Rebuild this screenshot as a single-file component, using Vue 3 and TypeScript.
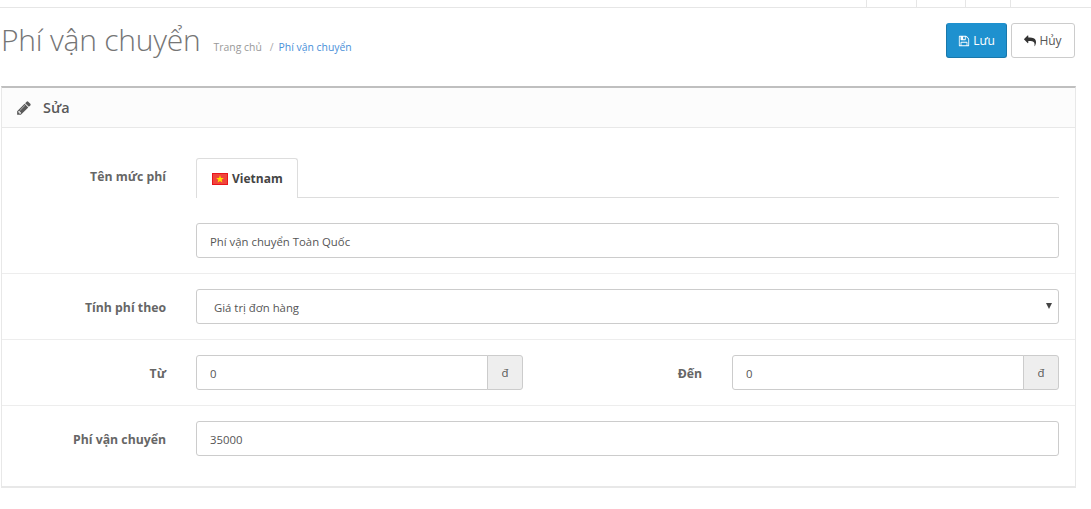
<script setup lang="ts">
const topCells: number[] = [50, 49, 45, 81];
</script>

<template>
  <div class="page">
    <header class="topbar">
      <span v-for="(w, i) in topCells" :key="i" class="cell" :style="{ width: w + 'px' }"></span>
    </header>

    <div class="page-head">
      <div class="title-wrap">
        <h1>Phí vận chuyển</h1>
        <ul class="crumbs">
          <li><a class="muted">Trang chủ</a></li>
          <li class="sep">/</li>
          <li><a class="link">Phí vận chuyển</a></li>
        </ul>
      </div>
      <div class="actions">
        <button class="btn primary" type="button">
          <svg class="ico" viewBox="0 0 1792 1792"><path fill="currentColor" d="M512 1536h768v-384h-768v384zm896 0h128v-896q0-14-10-38.5t-20-34.5l-281-281q-10-10-34-20t-39-10v416q0 40-28 68t-68 28h-576q-40 0-68-28t-28-68v-416h-128v1280h128v-416q0-40 28-68t68-28h832q40 0 68 28t28 68v416zm-384-928v-320q0-13-9.5-22.5t-22.5-9.5h-192q-13 0-22.5 9.5t-9.5 22.5v320q0 13 9.5 22.5t22.5 9.5h192q13 0 22.5-9.5t9.5-22.5zm640 32v928q0 40-28 68t-68 28h-1344q-40 0-68-28t-28-68v-1344q0-40 28-68t68-28h928q40 0 88 20t76 48l280 280q28 28 48 76t20 88z"/></svg>
          Lưu
        </button>
        <button class="btn plain" type="button">
          <svg class="ico" viewBox="0 0 1792 1792"><path fill="currentColor" d="M1792 1120q0 166-127 451-3 7-10.5 24t-13.5 30-13 22q-12 17-28 17-15 0-23.5-10t-8.5-25q0-9 2.5-26.5t2.5-23.5q5-68 5-123 0-101-17.5-181t-48.5-138.5-80-101-105.5-69.5-133-42.5-154-21.5-175.5-6h-224v256q0 26-19 45t-45 19-45-19l-512-512q-19-19-19-45t19-45l512-512q19-19 45-19t45 19 19 45v256h224q713 0 875 403 53 134 53 333z"/></svg>
          Hủy
        </button>
      </div>
    </div>

    <section class="panel">
      <div class="panel-heading">
        <svg class="pencil" viewBox="0 0 1792 1792"><path fill="currentColor" d="M491 1536l91-91-235-235-91 91v107h128v128h107zm523-928q0-22-22-22-10 0-17 7l-542 542q-7 7-7 17 0 22 22 22 10 0 17-7l542-542q7-7 7-17zm-54-192l416 416-832 832h-416v-416zm683 96q0 53-37 90l-166 166-416-416 166-165q36-38 90-38 53 0 91 38l235 234q37 39 37 91z"/></svg>
        <span>Sửa</span>
      </div>

      <form class="form" @submit.prevent>
        <div class="row first">
          <label class="lbl tab-lbl">Tên mức phí</label>
          <div class="field">
            <div class="tabs">
              <div class="tab">
                <svg class="flag" viewBox="0 0 16 12">
                  <rect width="16" height="12" fill="#ee1c25"/>
                  <rect x="0.5" y="0.5" width="15" height="11" fill="#f0443c" stroke="#e8141c"/>
                  <polygon points="8,2.2 9,5 11.9,5 9.6,6.8 10.4,9.6 8,7.9 5.6,9.6 6.4,6.8 4.1,5 7,5" fill="#ffe000"/>
                </svg>
                <span>Vietnam</span>
              </div>
            </div>
            <input class="control" type="text" value="Phí vận chuyển Toàn Quốc" />
          </div>
        </div>

        <div class="row">
          <label class="lbl">Tính phí theo</label>
          <div class="field select-wrap">
            <select class="control">
              <option>Giá trị đơn hàng</option>
            </select>
          </div>
        </div>

        <div class="row">
          <label class="lbl">Từ</label>
          <div class="field pair">
            <div class="group">
              <input class="control" type="text" value="0" />
              <span class="addon">đ</span>
            </div>
            <label class="lbl mid">Đến</label>
            <div class="group">
              <input class="control" type="text" value="0" />
              <span class="addon">đ</span>
            </div>
          </div>
        </div>

        <div class="row last">
          <label class="lbl">Phí vận chuyển</label>
          <div class="field">
            <input class="control" type="text" value="35000" />
          </div>
        </div>
      </form>
    </section>
  </div>
</template>

<style>
html, body {
  margin: 0;
  background: #fff;
}
</style>

<style scoped>
.page {
  width: 1091px;
  height: 509px;
  overflow: hidden;
  background: #fff;
  font-family: "Open Sans", "Noto Sans", sans-serif;
  font-size: 12px;
  color: #666;
}
.topbar {
  height: 7px;
  border-bottom: 1px solid #e6e6e6;
  display: flex;
  justify-content: flex-end;
}
.cell {
  box-sizing: border-box;
  border-left: 1px solid #e6e6e6;
}
.page-head {
  box-sizing: border-box;
  display: flex;
  justify-content: space-between;
  align-items: flex-start;
  height: 78px;
  padding: 15px 16px 0 1px;
}
.title-wrap {
  display: flex;
  align-items: baseline;
  margin-top: -1px;
}
h1 {
  margin: 0;
  font-size: 30px;
  letter-spacing: -0.22px;
  line-height: 36px;
  font-weight: 300;
  color: #757575;
}
.crumbs {
  list-style: none;
  margin: 0 0 0 13px;
  padding: 0;
  display: flex;
  font-size: 10.4px;
}
.muted { color: #999; }
.sep { color: #aaa; margin: 0 5px 0 8px; }
.link { color: #4a90d9; }
.actions {
  display: flex;
  gap: 4px;
}
.btn {
  height: 35px;
  box-sizing: border-box;
  border-radius: 3px;
  font-family: inherit;
  font-size: 12px;
  display: inline-flex;
  align-items: center;
  justify-content: center;
  gap: 3px;
  padding: 0;
}
.ico { width: 12px; height: 12px; }
.primary {
  width: 61px;
  background: #1e91cf;
  border: 1px solid #1978ab;
  border-top-color: #1e91cf;
  color: #fff;
}
.plain {
  width: 64px;
  background: #fff;
  border: 1px solid #ccc;
  color: #555;
}
.plain .ico { color: #333; }
.panel {
  box-sizing: border-box;
  width: 1075px;
  height: 402px;
  margin-left: 1px;
  border: 1px solid #e8e8e8;
  border-top: 2px solid #bfbfbf;
  border-bottom: 2px solid #e8e8e8;
}
.panel-heading {
  height: 40px;
  box-sizing: border-box;
  background: #fcfcfc;
  border-bottom: 1px solid #e8e8e8;
  display: flex;
  align-items: center;
  padding-left: 14px;
  gap: 11px;
  font-size: 14.4px;
  font-weight: 600;
  color: #595959;
}
.pencil { width: 16px; height: 16px; }
.row {
  display: flex;
  padding: 15px 16px 15px 15px;
  border-top: 1px solid #ededed;
}
.row.first {
  padding-top: 30px;
  border-top: 0;
}
.row.last { padding-bottom: 30px; }
.lbl {
  flex: 0 0 149px;
  height: 35px;
  text-align: right;
  font-weight: 700;
  font-size: 12.25px;
  line-height: 37px;
  color: #666;
}
.tab-lbl { line-height: 38px; }
.field {
  flex: 1;
  margin-left: 30px;
  min-width: 0;
}
.tabs {
  height: 40px;
  box-sizing: border-box;
  border-bottom: 1px solid #ddd;
  margin-bottom: 25px;
}
.tab {
  box-sizing: border-box;
  width: 102px;
  height: 40px;
  background: #fff;
  border: 1px solid #ddd;
  border-bottom: 0;
  border-radius: 3px 3px 0 0;
  display: flex;
  align-items: center;
  padding-left: 15px;
  gap: 4px;
  font-weight: 700;
  font-size: 12px;
  color: #444;
}
.flag { width: 16px; height: 12px; }
.control {
  display: block;
  box-sizing: border-box;
  width: 100%;
  height: 35px;
  border: 1px solid #ccc;
  border-radius: 3px;
  padding: 1px 13px 0;
  background: #fff;
  font-family: inherit;
  font-size: 11.35px;
  color: #555;
  outline: none;
}
select.control {
  appearance: none;
  padding-left: 17px;
}
.select-wrap {
  position: relative;
}
.select-wrap::after {
  content: "";
  position: absolute;
  right: 7px;
  top: 14px;
  width: 0;
  height: 0;
  border-left: 3px solid transparent;
  border-right: 3px solid transparent;
  border-top: 6px solid #444;
  pointer-events: none;
}
.pair {
  display: flex;
}
.group {
  flex: 1;
  display: flex;
  min-width: 0;
}
.group .control {
  flex: 1;
  min-width: 0;
  border-radius: 3px 0 0 3px;
}
.addon {
  box-sizing: border-box;
  width: 36px;
  height: 35px;
  margin-left: -1px;
  background: #eee;
  border: 1px solid #ccc;
  border-radius: 0 3px 3px 0;
  display: flex;
  align-items: center;
  justify-content: center;
  font-size: 11.4px;
  color: #555;
}
.lbl.mid {
  flex: 0 0 209px;
  padding-right: 30px;
  box-sizing: border-box;
}
</style>
